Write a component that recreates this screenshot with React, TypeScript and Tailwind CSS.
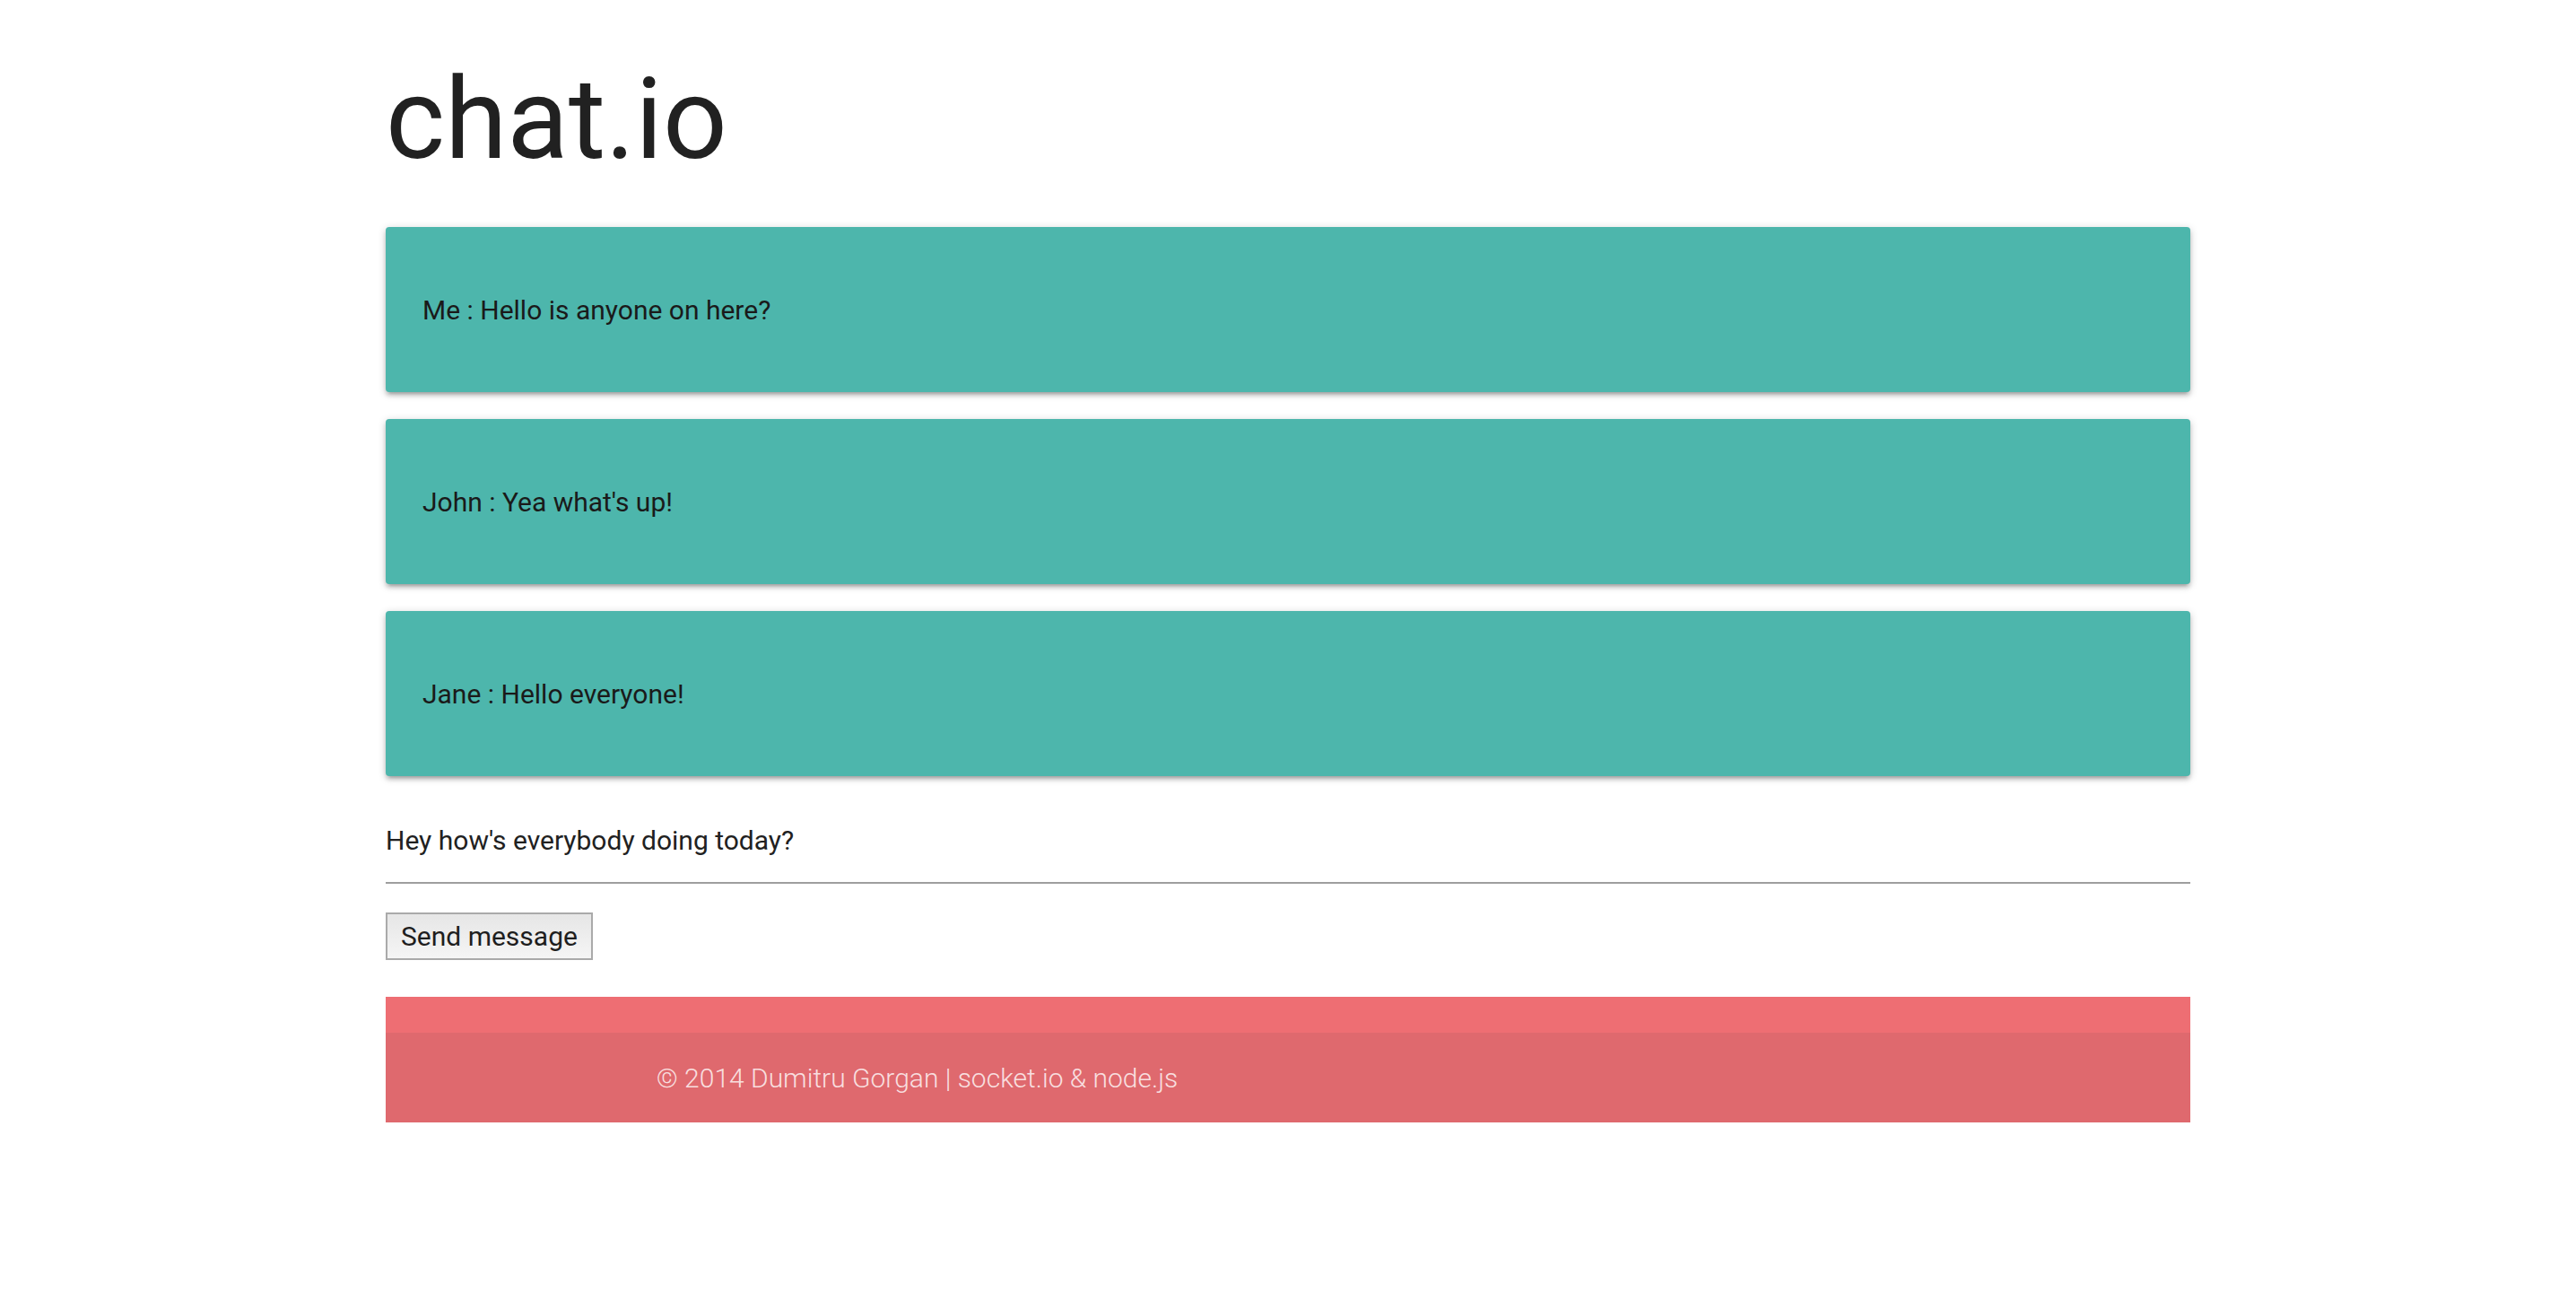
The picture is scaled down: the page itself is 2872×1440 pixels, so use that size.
import React from 'react';

const messages = [
  { from: 'Me', text: 'Hello is anyone on here?' },
  { from: 'John', text: "Yea what's up!" },
  { from: 'Jane', text: 'Hello everyone!' },
];

const App: React.FC = () => {
  return (
    <div className="min-h-screen bg-white font-['Roboto',sans-serif]">
      <div className="w-[2012px] mx-auto">
        <h1 className="pt-[70px] text-[126px] leading-none font-normal text-[#212121]">chat.io</h1>

        <div className="mt-[57px] flex flex-col gap-[30px]">
          {messages.map((m) => (
            <div
              key={m.from}
              className="h-[184px] flex items-center px-[41px] rounded-[4px] bg-[#4db6ac] text-[30px] text-[#1a1a1a] shadow-[0_4px_4px_0_rgba(0,0,0,0.14),0_6px_2px_-4px_rgba(0,0,0,0.12),0_2px_10px_0_rgba(0,0,0,0.2)]"
            >
              {m.from} : {m.text}
            </div>
          ))}
        </div>

        <input
          type="text"
          defaultValue="Hey how's everybody doing today?"
          className="mt-[24px] block w-full h-[96px] border-b-2 border-[#9e9e9e] bg-transparent text-[30px] text-[#212121] outline-none"
        />

        <button className="mt-[32px] block h-[53px] px-[15px] border-2 border-[#aaaaaa] bg-gradient-to-b from-[#e6e6e6] to-[#f5f5f5] text-[30px] leading-none text-[#1e1e1e]">
          Send message
        </button>

        <footer className="mt-[41px] bg-[#ee6e73]">
          <div className="h-[40px]"></div>
          <div className="h-[100px] flex items-center bg-[rgba(51,51,51,0.08)]">
            <div className="w-[70%] mx-auto text-[30px] font-light text-[rgba(255,255,255,0.8)]">
              © 2014 Dumitru Gorgan | socket.io &amp; node.js
            </div>
          </div>
        </footer>
      </div>
    </div>
  );
};

export default App;
